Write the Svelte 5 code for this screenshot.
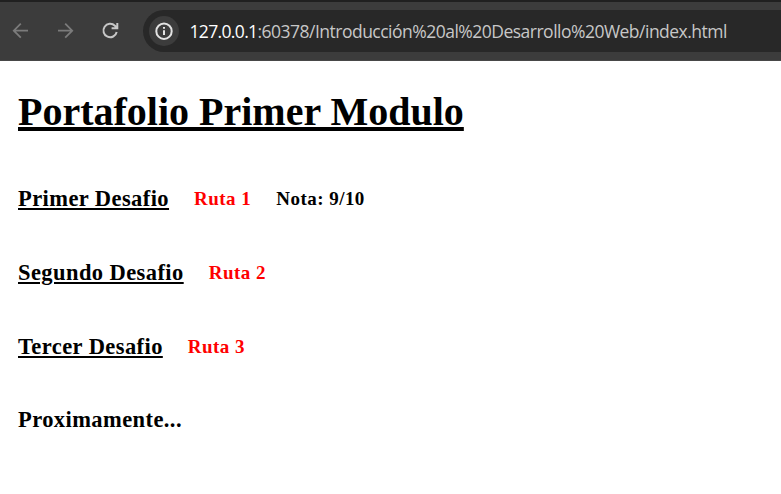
<script>
  const challenges = [
    { title: 'Primer Desafio', route: 'Ruta 1', grade: 'Nota: 9/10' },
    { title: 'Segundo Desafio', route: 'Ruta 2' },
    { title: 'Tercer Desafio', route: 'Ruta 3' }
  ];
</script>

<div class="window">
  <header class="toolbar">
    <svg class="nav" viewBox="0 0 20 20" aria-hidden="true">
      <path d="M17 9.7H3M9.8 2.7L2.8 9.7L9.8 16.7" />
    </svg>
    <svg class="nav forward" viewBox="0 0 20 20" aria-hidden="true">
      <path d="M3 9.7H17M10.2 2.7L17.2 9.7L10.2 16.7" />
    </svg>
    <svg class="nav reload" viewBox="0 0 20 20" aria-hidden="true">
      <path d="M16.7 11A6.7 6.7 0 1 1 14.9 4.8L16.8 6.8M17.3 2V7.3H11.6" />
    </svg>
    <div class="address">
      <span class="info">
        <svg viewBox="0 0 18 18" aria-hidden="true">
          <circle cx="9" cy="9.2" r="7.7" />
          <path d="M9 8.2V13M9 4.9V6.7" />
        </svg>
      </span>
      <span class="url"><b>127.0.0.1</b>:60378/Introducción%20al%20Desarrollo%20Web/index.html</span>
    </div>
  </header>

  <main>
    <h1>Portafolio Primer Modulo</h1>
    {#each challenges as item}
      <div class="row">
        <h2 class="underlined">{item.title}</h2>
        <span class="route">{item.route}</span>
        {#if item.grade}<span class="grade">{item.grade}</span>{/if}
      </div>
    {/each}
    <div class="row last">
      <h2>Proximamente...</h2>
    </div>
  </main>
</div>

<style>
  .window {
    height: 494px;
    overflow: hidden;
    background: #fff;
    color: #000;
    font-family: 'Liberation Serif', 'Times New Roman', serif;
  }
  .toolbar {
    box-sizing: border-box;
    height: 61px;
    display: flex;
    align-items: center;
    padding: 0 0 0 11px;
    border-top: 2px solid #202020;
    border-bottom: 1px solid #484848;
    background: #3c3c3c;
  }
  .nav {
    flex: none;
    width: 20px;
    height: 20px;
    fill: none;
    stroke: #7b7b7b;
    stroke-width: 1.8;
  }
  .forward {
    margin-left: 24px;
  }
  .reload {
    margin-left: 25px;
    stroke: #c7c7c7;
    stroke-width: 2;
  }
  .address {
    flex: 1;
    height: 42px;
    margin-left: 23px;
    display: flex;
    align-items: center;
    padding-left: 6px;
    border-radius: 21px 0 0 21px;
    background: #282828;
  }
  .info {
    flex: none;
    width: 30px;
    height: 30px;
    display: flex;
    align-items: center;
    justify-content: center;
    border-radius: 50%;
    background: #3c3c3c;
  }
  .info svg {
    width: 18px;
    height: 18px;
    fill: none;
    stroke: #e3e3e3;
    stroke-width: 2;
  }
  .url {
    margin-left: 10.5px;
    font: 17.5px/24px 'Open Sans', 'Segoe UI', sans-serif;
    letter-spacing: -0.51px;
    white-space: nowrap;
    color: #c7c7c7;
  }
  .url b {
    font-weight: 400;
    letter-spacing: -0.65px;
    color: #fff;
  }
  main {
    padding: 27px 18px 0;
  }
  h1 {
    margin: 0 0 50px;
    font-size: 40px;
    line-height: 48px;
    text-decoration: underline;
    text-decoration-thickness: 4px;
    text-underline-offset: 2px;
    text-decoration-skip-ink: none;
    white-space: nowrap;
  }
  .row {
    display: flex;
    align-items: baseline;
    height: 26px;
    margin-bottom: 48px;
    line-height: 26px;
    font-size: 19px;
    font-weight: 700;
    letter-spacing: 0.47px;
    white-space: nowrap;
  }
  .last {
    margin-top: -49px;
    padding-top: 48px;
  }
  h2 {
    margin: 0;
    font-size: 22.5px;
    line-height: 26px;
    letter-spacing: 0.42px;
  }
  .underlined {
    text-decoration: underline;
    text-decoration-thickness: 2px;
    text-underline-offset: 2px;
  }
  .route {
    position: relative;
    top: -1px;
    margin-left: 25px;
    color: #f00;
  }
  .grade {
    position: relative;
    top: -1px;
    margin-left: 25px;
  }
</style>
